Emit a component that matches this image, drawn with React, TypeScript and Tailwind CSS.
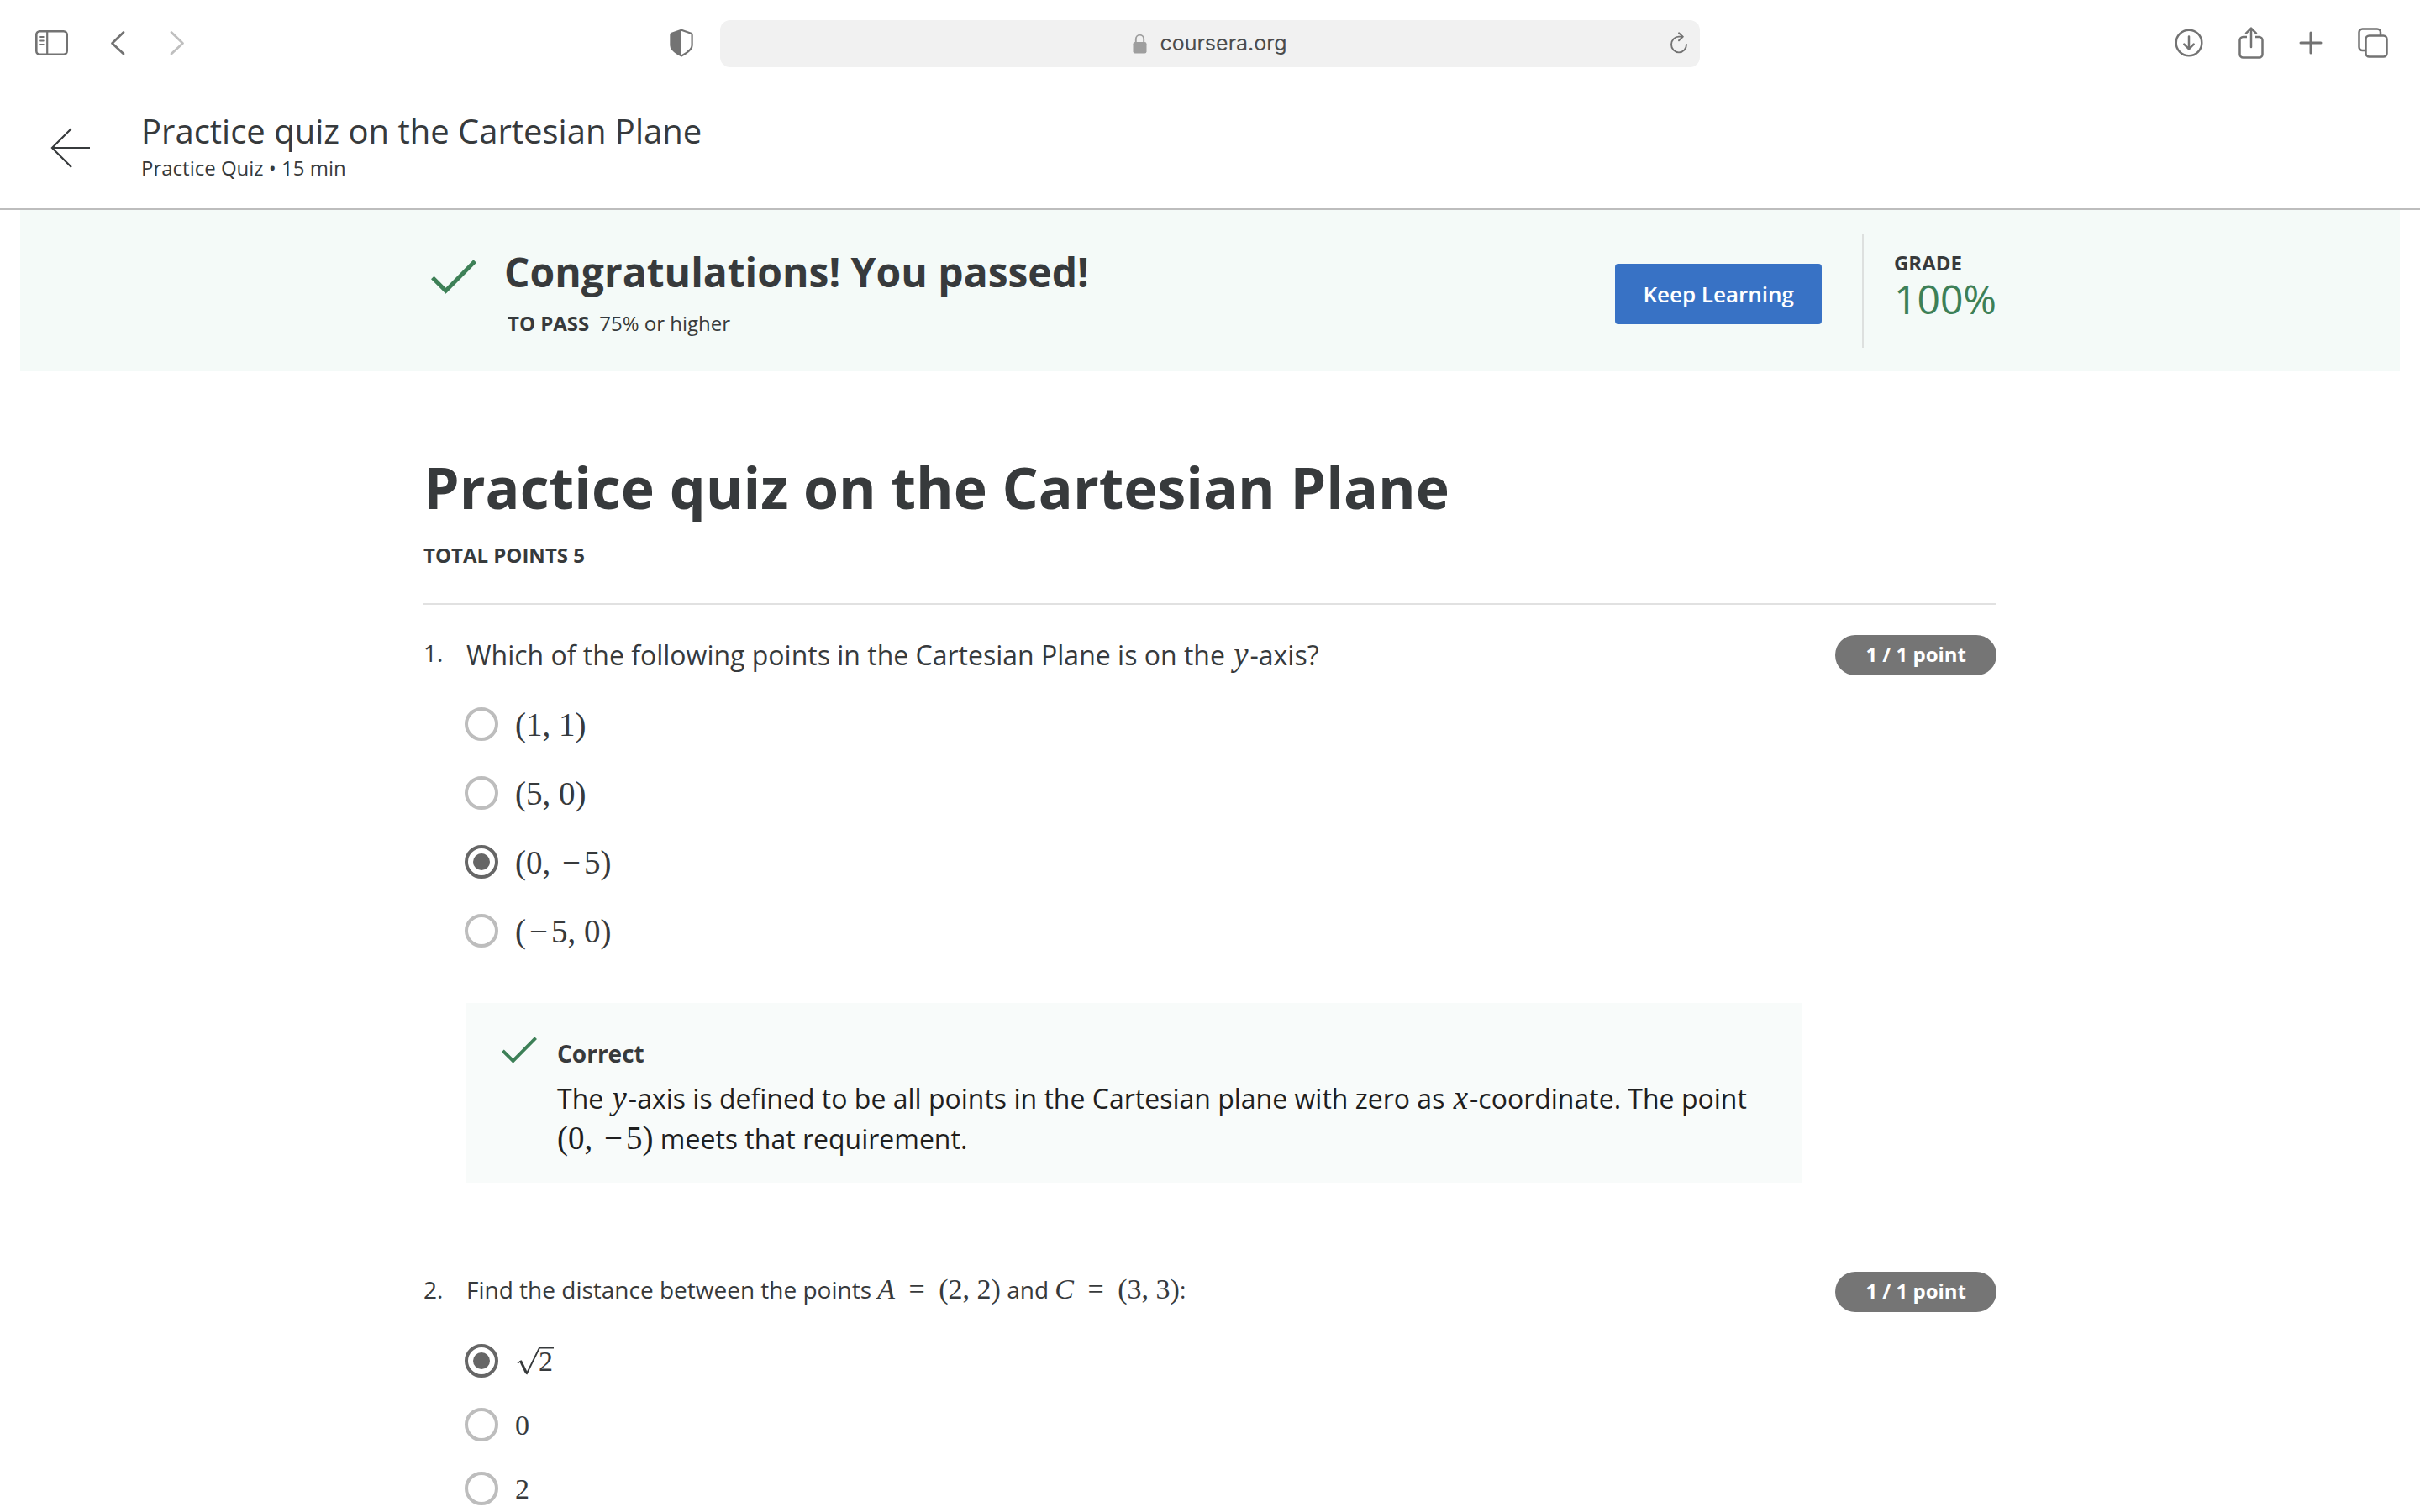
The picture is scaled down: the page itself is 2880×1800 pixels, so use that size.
import type { ReactNode } from 'react';

const stroke = {
  fill: 'none',
  stroke: 'currentColor',
  strokeLinecap: 'round' as const,
  strokeLinejoin: 'round' as const,
};

function SidebarIcon() {
  return (
    <svg className="h-[30px] w-[39px]" viewBox="0 0 39 30" {...stroke} strokeWidth={2.6}>
      <rect x="1.3" y="1.3" width="36.4" height="27.4" rx="4" />
      <path d="M14.2 1.3v27.4" strokeWidth={2.2} />
      <path d="M6 8h3.800M6 12.500h3.800M6 17h3.800" strokeWidth={1.8} />
    </svg>
  );
}

function ChevronIcon({ flip }: { flip?: boolean }) {
  return (
    <svg className="h-[30px] w-[18px]" viewBox="0 0 18 30" {...stroke} strokeWidth={2.8}>
      <path d={flip ? 'M2 2.5 15.5 15.500 2 28' : 'M16 2.5 2.5 15.500 16 28'} />
    </svg>
  );
}

function ShieldIcon() {
  return (
    <svg className="h-[34px] w-[30px]" viewBox="0 0 30 34">
      <path
        d="M15 1.800 26.500 5.800q1.100.5 1.100 1.800V20q0 2.500-2 4.800Q22 29 15 32.400 8 29 4.400 24.800q-2-2.300-2-4.800V7.600q0-1.300 1.100-1.800Z"
        fill="none"
        stroke="currentColor"
        strokeWidth={2.2}
        strokeLinejoin="round"
      />
      <path
        d="M15 1.800V32.400Q8 29 4.400 24.800q-2-2.300-2-4.800V7.600q0-1.300 1.100-1.800Z"
        fill="currentColor"
      />
    </svg>
  );
}

function LockIcon() {
  return (
    <svg className="h-6 w-[17px]" viewBox="0 0 17 24">
      <rect x="0.5" y="10" width="16" height="13.5" rx="2.2" fill="currentColor" />
      <path d="M3.8 11V6.6a4.7 5 0 0 1 9.4 0V11" fill="none" stroke="currentColor" strokeWidth={1.9} />
    </svg>
  );
}

function ReloadIcon() {
  return (
    <svg className="h-[26px] w-[22px]" viewBox="0 0 22 26" {...stroke} strokeWidth={1.9}>
      <path d="M20 15a9 9.4 0 1 1-9-9.4h4.5" />
      <path d="M11 1.3l4.7 4.4L11 10.3" />
    </svg>
  );
}

function DownloadIcon() {
  return (
    <svg className="size-[34px]" viewBox="0 0 34 34" {...stroke} strokeWidth={2.5}>
      <circle cx="17" cy="17" r="15.3" />
      <path d="M17 9.5v14.5M11.3 18.7 17 24.3l5.7-5.6" />
    </svg>
  );
}

function ShareIcon() {
  return (
    <svg className="h-[38px] w-[30px]" viewBox="0 0 30 38" {...stroke} strokeWidth={2.5}>
      <path
        d="M10 12H5.5A4 4 0 0 0 1.5 16v16.5a4 4 0 0 0 4 4h19a4 4 0 0 0 4-4V16a4 4 0 0 0-4-4H20"
        strokeLinecap="butt"
      />
      <path d="M15 24V2M9 7.6l6-6 6 6" />
    </svg>
  );
}

function PlusIcon() {
  return (
    <svg className="size-7" viewBox="0 0 28 28" {...stroke} strokeWidth={3}>
      <path d="M14 2v24M2 14h24" />
    </svg>
  );
}

function TabsIcon() {
  return (
    <svg className="size-9" viewBox="0 0 36 36" {...stroke} strokeWidth={2.5}>
      <path d="M9 27H5.5a4 4 0 0 1-4-4V5.5a4 4 0 0 1 4-4H23a4 4 0 0 1 4 4V9" />
      <rect x="9.5" y="9.5" width="25" height="25" rx="4" />
    </svg>
  );
}

function BackArrow() {
  return (
    <svg className="size-12" viewBox="0 0 48 48" fill="none" stroke="currentColor" strokeWidth={2.2}>
      <path d="M1.5 24H47M25 1 2 24l23 23" />
    </svg>
  );
}

function Check({ className }: { className: string }) {
  return (
    <svg className={className} viewBox="0 0 54 41" fill="none" stroke="#3d8057" strokeWidth={5}>
      <path d="M1.8 21.5 17.5 37.2 52.2 2" />
    </svg>
  );
}

function Formula({ className, children }: { className: string; children: ReactNode }) {
  return (
    <span className={`font-['Liberation_Serif',serif] leading-none whitespace-nowrap ${className}`}>{children}</span>
  );
}

function Variable({ children }: { children: ReactNode }) {
  return <i className="mx-0.5 font-['Liberation_Serif',serif] text-[39px] leading-none">{children}</i>;
}

function Minus() {
  return <span className="mx-1">−</span>;
}

function Equals() {
  return <span className="mx-2">=</span>;
}

function Sqrt({ children }: { children: ReactNode }) {
  return (
    <span className="relative inline-block pl-7">
      <svg className="absolute top-0.5 left-0.5 h-[34px] w-[45px]" viewBox="0 0 45 34" fill="none" stroke="currentColor">
        <path d="M1 20 5 17" strokeWidth={1.5} />
        <path d="M4.500 17 11.500 31.500" strokeWidth={3} />
        <path d="M11.500 33 27 1.500H44" strokeWidth={1.8} />
      </svg>
      {children}
    </span>
  );
}

function Option({ name, label, checked }: { name: string; label: ReactNode; checked?: boolean }) {
  return (
    <label className="flex h-10 items-center gap-5">
      <input
        type="radio"
        name={name}
        defaultChecked={checked}
        className="size-10 shrink-0 appearance-none rounded-full border-4 border-[#bdbdbd] bg-clip-content p-1.5 checked:border-[#666666] checked:bg-[#666666]"
      />
      <span className="pt-0.5 font-['Liberation_Serif',serif] leading-10 whitespace-nowrap">{label}</span>
    </label>
  );
}

function Question({
  number,
  prompt,
  promptClass,
  children,
}: {
  number: number;
  prompt: ReactNode;
  promptClass: string;
  children: ReactNode;
}) {
  return (
    <section className="grid grid-cols-[51px_1fr_auto]">
      <span className="text-[28px] leading-[42px]">{number}.</span>
      <p className={promptClass}>{prompt}</p>
      <span className="flex h-12 items-center rounded-full bg-[#757575] px-9 pb-0.5 text-2xl font-bold text-white">
        1 / 1 point
      </span>
      <div className="col-span-2 col-start-2">{children}</div>
    </section>
  );
}

export default function App() {
  return (
    <div className="min-h-screen bg-white font-['Open_Sans',sans-serif] text-[#373a3c]">
      <nav className="grid h-[104px] grid-cols-[1fr_minmax(0,1166px)_1fr] items-center px-[38px] text-[#737373]">
        <div className="flex items-center pb-0.5 pl-1">
          <button aria-label="Sidebar"><SidebarIcon /></button>
          <button aria-label="Back" className="ml-[50px]"><ChevronIcon /></button>
          <button aria-label="Forward" className="ml-[53px] text-[#bfbfbf]"><ChevronIcon flip /></button>
          <button aria-label="Privacy report" className="mr-[31px] ml-auto"><ShieldIcon /></button>
        </div>
        <div className="flex h-14 items-center rounded-xl bg-[#f1f1f1] pr-[14px] pl-9">
          <div className="flex flex-1 items-center justify-center gap-[15px] text-[#9e9e9e]">
            <LockIcon />
            <span className="font-[Inter,sans-serif] text-[25px] text-[#4c4c4c]">coursera.org</span>
          </div>
          <button aria-label="Reload" className="pb-0.5"><ReloadIcon /></button>
        </div>
        <div className="flex items-center justify-end gap-[42px] pb-0.5">
          <button aria-label="Downloads"><DownloadIcon /></button>
          <button aria-label="Share"><ShareIcon /></button>
          <button aria-label="New tab"><PlusIcon /></button>
          <button aria-label="Show tabs"><TabsIcon /></button>
        </div>
      </nav>

      <header className="flex h-[146px] items-start border-b-2 border-[#bdbdbd] pt-7 pl-[60px]">
        <a href="#course" aria-label="Back to course" className="mt-5 mr-[60px]"><BackArrow /></a>
        <div>
          <div className="text-[40px] leading-[48px]">Practice quiz on the Cartesian Plane</div>
          <div className="mt-1 text-2xl leading-8">Practice Quiz • 15 min</div>
        </div>
      </header>

      <div className="mx-6 h-48 bg-[#f4faf8]">
        <div className="mx-auto flex max-w-[1872px] items-start">
          <Check className="mt-[59px] ml-[9px] h-[41px] w-[54px]" />
          <div className="mt-[42px] ml-[33px] flex-1">
            <h2 className="text-5xl leading-[64px] font-bold">Congratulations! You passed!</h2>
            <p className="mt-[13px] ml-1 text-2xl leading-8">
              <strong className="mr-3 font-bold">TO PASS</strong>
              <span>75% or higher</span>
            </p>
          </div>
          <button className="mt-16 mr-12 h-[72px] rounded-sm bg-[#3872c5] px-[33px] text-[26px] font-semibold text-white">
            Keep Learning
          </button>
          <div className="mt-7 h-[136px] border-l-2 border-[#dde0df] pt-[19px] pl-9">
            <div className="text-2xl leading-8 font-bold">GRADE</div>
            <div className="text-5xl leading-[54px] text-[#3d8057]">100%</div>
          </div>
        </div>
      </div>

      <main className="mx-auto max-w-[1872px] pt-[98px]">
        <h1 className="text-[68px] leading-[80px] font-bold">Practice quiz on the Cartesian Plane</h1>
        <p className="mt-[25px] text-2xl leading-8 font-bold">TOTAL POINTS 5</p>
        <hr className="mt-[41px] mb-9 border-t-2 border-[#e1e1e1]" />

        <Question
          number={1}
          promptClass="text-[32px] leading-[48px]"
          prompt={<>Which of the following points in the Cartesian Plane is on the <Variable>y</Variable>-axis?</>}
        >
          <div className="mt-[38px] -ml-0.5 flex flex-col gap-[42px] text-[39px]">
            <Option name="q1" label="(1, 1)" />
            <Option name="q1" label="(5, 0)" />
            <Option name="q1" label={<>(0, <Minus />5)</>} checked />
            <Option name="q1" label={<>(<Minus />5, 0)</>} />
          </div>
          <div className="mt-[66px] mr-[231px] flex bg-[#f8fbfa] pt-10 pb-7 pl-[42px] text-[#1f1f1f]">
            <Check className="h-8 w-[42px] shrink-0" />
            <div className="ml-6">
              <div className="text-[28px] leading-10 font-bold text-[#373a3c]">Correct</div>
              <p className="mt-[10px] pr-12 text-[32px] leading-[48px]">
                The <Variable>y</Variable>-axis is defined to be all points in the Cartesian plane with zero as{' '}
                <Variable>x</Variable>-coordinate. The point{' '}
                <Formula className="text-[39px]">(0, <Minus />5)</Formula> meets that requirement.
              </p>
            </div>
          </div>
        </Question>

        <div className="mt-[106px]">
          <Question
            number={2}
            promptClass="text-[28px] leading-[42px]"
            prompt={
              <>
                Find the distance between the points{' '}
                <Formula className="text-[34px]"><i>A</i> <Equals /> (2, 2)</Formula> and{' '}
                <Formula className="text-[34px]"><i>C</i> <Equals /> (3, 3)</Formula>:
              </>
            }
          >
            <div className="mt-[38px] -ml-0.5 flex flex-col gap-9 text-[34px]">
              <Option name="q2" label={<Sqrt>2</Sqrt>} checked />
              <Option name="q2" label="0" />
              <Option name="q2" label="2" />
            </div>
          </Question>
        </div>
      </main>
    </div>
  );
}
